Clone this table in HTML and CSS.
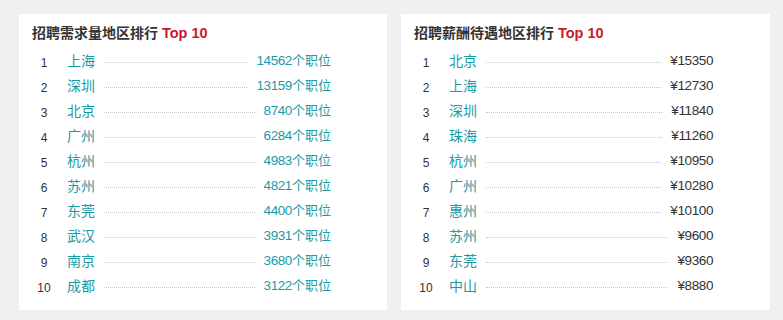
FILE: index.html
```html
<!DOCTYPE html>
<html lang="zh">
<head>
<meta charset="utf-8">
<title>招聘地区排行</title>
<link rel="stylesheet" href="styles.css">
</head>
<body>
<div class="page">
  <section class="card">
    <h2 class="title">招聘需求量地区排行 <span class="top">Top 10</span></h2>
    <ol class="list">
      <li class="row"><span class="rank">1</span><span class="city">上海</span><span class="dots"></span><span class="val teal"><span class="num">14562</span>个职位</span></li>
      <li class="row"><span class="rank">2</span><span class="city">深圳</span><span class="dots"></span><span class="val teal"><span class="num">13159</span>个职位</span></li>
      <li class="row"><span class="rank">3</span><span class="city">北京</span><span class="dots"></span><span class="val teal"><span class="num">8740</span>个职位</span></li>
      <li class="row"><span class="rank">4</span><span class="city">广州</span><span class="dots"></span><span class="val teal"><span class="num">6284</span>个职位</span></li>
      <li class="row"><span class="rank">5</span><span class="city">杭州</span><span class="dots"></span><span class="val teal"><span class="num">4983</span>个职位</span></li>
      <li class="row"><span class="rank">6</span><span class="city">苏州</span><span class="dots"></span><span class="val teal"><span class="num">4821</span>个职位</span></li>
      <li class="row"><span class="rank">7</span><span class="city">东莞</span><span class="dots"></span><span class="val teal"><span class="num">4400</span>个职位</span></li>
      <li class="row"><span class="rank">8</span><span class="city">武汉</span><span class="dots"></span><span class="val teal"><span class="num">3931</span>个职位</span></li>
      <li class="row"><span class="rank">9</span><span class="city">南京</span><span class="dots"></span><span class="val teal"><span class="num">3680</span>个职位</span></li>
      <li class="row"><span class="rank">10</span><span class="city">成都</span><span class="dots"></span><span class="val teal"><span class="num">3122</span>个职位</span></li>
    </ol>
  </section>
  <section class="card">
    <h2 class="title">招聘薪酬待遇地区排行 <span class="top">Top 10</span></h2>
    <ol class="list">
      <li class="row"><span class="rank">1</span><span class="city">北京</span><span class="dots"></span><span class="val num">¥15350</span></li>
      <li class="row"><span class="rank">2</span><span class="city">上海</span><span class="dots"></span><span class="val num">¥12730</span></li>
      <li class="row"><span class="rank">3</span><span class="city">深圳</span><span class="dots"></span><span class="val num">¥11840</span></li>
      <li class="row"><span class="rank">4</span><span class="city">珠海</span><span class="dots"></span><span class="val num">¥11260</span></li>
      <li class="row"><span class="rank">5</span><span class="city">杭州</span><span class="dots"></span><span class="val num">¥10950</span></li>
      <li class="row"><span class="rank">6</span><span class="city">广州</span><span class="dots"></span><span class="val num">¥10280</span></li>
      <li class="row"><span class="rank">7</span><span class="city">惠州</span><span class="dots"></span><span class="val num">¥10100</span></li>
      <li class="row"><span class="rank">8</span><span class="city">苏州</span><span class="dots"></span><span class="val num">¥9600</span></li>
      <li class="row"><span class="rank">9</span><span class="city">东莞</span><span class="dots"></span><span class="val num">¥9360</span></li>
      <li class="row"><span class="rank">10</span><span class="city">中山</span><span class="dots"></span><span class="val num">¥8880</span></li>
    </ol>
  </section>
</div>
</body>
</html>
```

FILE: styles.css
```css
html, body {
  margin: 0;
  padding: 0;
  background: #f0f0f0;
}
body {
  font-family: "Liberation Sans", "Noto Sans CJK SC", sans-serif;
  color: #333;
}
.page {
  display: grid;
  grid-template-columns: 368px 369px;
  column-gap: 14px;
  padding: 14px 13px 0 19px;
}
.card {
  background: #fff;
  height: 296px;
  box-sizing: border-box;
  padding: 8px 13px 0 13px;
}
.title {
  margin: 0 0 4px 0;
  font-size: 14px;
  line-height: 22px;
  font-weight: bold;
  color: #333;
}
.top {
  color: #c8192b;
  font-size: 14.5px;
}
.list {
  list-style: none;
  margin: 0;
  padding: 0;
  width: 299px;
}
.row {
  display: flex;
  align-items: center;
  height: 25px;
}
.rank {
  width: 24px;
  text-align: center;
  font-size: 12px;
  line-height: 14px;
  padding-top: 5px;
  color: #333;
}
.city {
  margin-left: 11px;
  font-size: 14px;
  line-height: 18px;
  color: #1a9aa5;
}
.dots {
  flex: 1;
  margin: 3px 9px 0 9px;
  border-top: 1px dotted #c8c8c8;
  height: 0;
}
.val {
  font-size: 13px;
  line-height: 18px;
  color: #333;
}
.val.teal {
  color: #1a9aa5;
}
.num {
  font-size: 13.5px;
  letter-spacing: -0.4px;
}
```
